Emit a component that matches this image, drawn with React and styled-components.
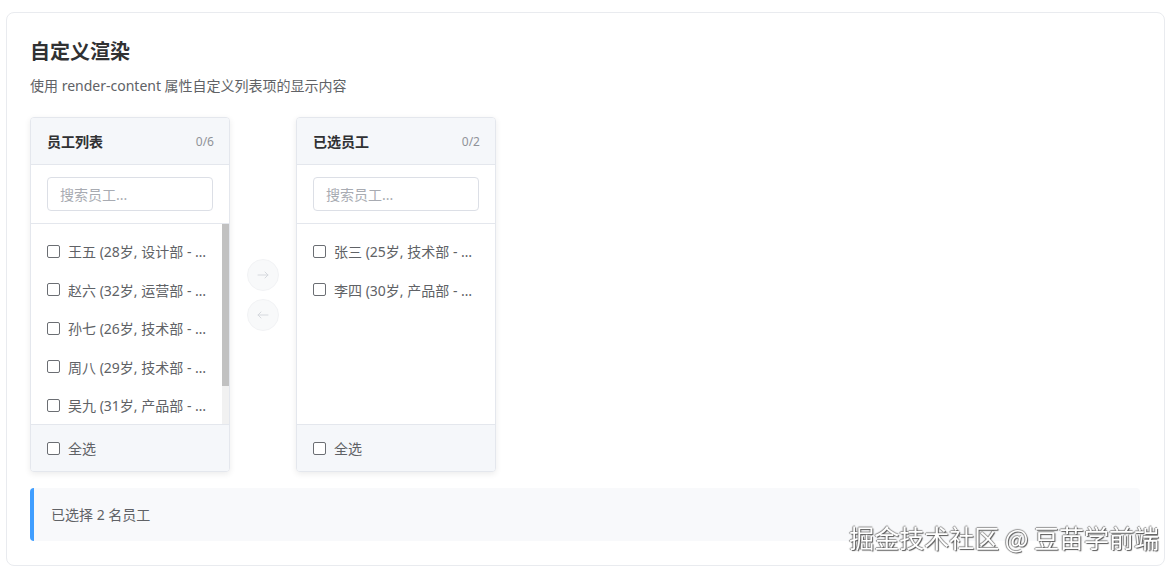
import React, { useState } from "react"
import styled, { createGlobalStyle } from "styled-components"

const GlobalStyle = createGlobalStyle`
  html, body {
    margin: 0;
    padding: 0;
    background: #ffffff;
  }
  body {
    font-family: "Noto Sans", "Noto Sans CJK SC", sans-serif;
    color: #303133;
  }
  * {
    box-sizing: border-box;
  }
`

const ITEM_H = 38.5
const LIST_H = 200
const LIST_PAD = 8

const Page = styled.div`
  padding: 12px 10px 4px 6px;
`

const Card = styled.section`
  border: 1px solid #e9ebef;
  border-radius: 8px;
  padding: 24px 24px 24px 23px;
  background: #fff;
`

const Title = styled.h3`
  margin: 0;
  font-size: 20px;
  line-height: 30px;
  font-weight: 700;
  color: #303133;
`

const Desc = styled.p`
  margin: 8px 0 20px;
  font-size: 14px;
  line-height: 22px;
  color: #606266;
`

const Transfer = styled.div`
  display: flex;
  align-items: center;
`

const Panel = styled.div`
  width: 200px;
  height: 355px;
  display: flex;
  flex-direction: column;
  border: 1px solid #e4e7ed;
  border-radius: 4px;
  overflow: hidden;
  background: #fff;
  box-shadow: 0 2px 6px rgba(0, 0, 0, 0.08);
`

const PanelHeader = styled.div`
  height: 47px;
  flex-shrink: 0;
  display: flex;
  align-items: center;
  justify-content: space-between;
  padding: 0 15px 0 16px;
  background: #f5f7fa;
  border-bottom: 1px solid #e4e7ed;
`

const PanelTitle = styled.span`
  font-size: 14px;
  font-weight: 600;
  color: #303133;
`

const Count = styled.span`
  font-size: 12px;
  color: #909399;
`

const SearchBox = styled.div`
  flex-shrink: 0;
  padding: 12px 16px;
  border-bottom: 1px solid #e4e7ed;
`

const SearchInput = styled.input`
  width: 100%;
  height: 34px;
  border: 1px solid #dcdfe6;
  border-radius: 4px;
  padding: 0 12px;
  font-family: inherit;
  font-size: 14px;
  color: #606266;
  outline: none;

  &::placeholder {
    color: #a8abb2;
  }
`

const ListWrap = styled.div`
  position: relative;
  height: ${LIST_H}px;
  flex-shrink: 0;
`

const List = styled.ul`
  height: 100%;
  margin: 0;
  padding: ${LIST_PAD}px 0;
  list-style: none;
  overflow-y: auto;
  scrollbar-width: none;

  &::-webkit-scrollbar {
    display: none;
  }
`

const ScrollTrack = styled.div`
  position: absolute;
  top: 0;
  right: 0;
  bottom: 0;
  width: 7px;
  background: #f1f1f1;
`

const ScrollThumb = styled.div`
  position: absolute;
  left: 0;
  right: 0;
  background: #c1c1c1;
`

const Item = styled.li`
  height: ${ITEM_H}px;
  display: flex;
  align-items: center;
  padding: 0 16px;
  font-size: 14px;
  color: #606266;
`

const Box = styled.span`
  width: 13px;
  height: 13px;
  flex-shrink: 0;
  border: 1px solid #6b6e73;
  border-radius: 2px;
  background: ${props => (props.checked ? "#409eff" : "#fff")};
  margin-right: 8px;
`

const Label = styled.span`
  width: 140px;
  white-space: nowrap;
  overflow: hidden;
  text-overflow: ellipsis;
`

const PanelFooter = styled.div`
  flex: 1;
  display: flex;
  align-items: center;
  padding: 0 16px;
  background: #f5f7fa;
  border-top: 1px solid #e4e7ed;
  font-size: 14px;
  color: #606266;
`

const Buttons = styled.div`
  display: flex;
  flex-direction: column;
  gap: 8px;
  margin: 0 17px;
`

const ArrowButton = styled.button`
  width: 32px;
  height: 32px;
  border-radius: 50%;
  border: 1px solid #f2f3f5;
  background: #f8f9fa;
  display: flex;
  align-items: center;
  justify-content: center;
  padding: 0;
  cursor: not-allowed;
`

const Notice = styled.div`
  margin-top: 16px;
  padding: 16px 20px 16px 17px;
  background: #f8f9fb;
  border-left: 4px solid #409eff;
  border-radius: 4px;
  font-size: 14px;
  line-height: 21px;
  color: #606266;
`

const Watermark = styled.div`
  position: fixed;
  right: 16px;
  bottom: 19px;
  font-family: "Noto Sans CJK SC", sans-serif;
  font-size: 25px;
  line-height: 30px;
  color: #ffffff;
  text-shadow: 1px 1px 1px #555, -1px 0 1px #888, 0 -1px 1px #999;
  pointer-events: none;
`

const employees = [
  { id: 1, name: "张三", age: 25, dept: "技术部", role: "前端工程师" },
  { id: 2, name: "李四", age: 30, dept: "产品部", role: "产品经理" },
  { id: 3, name: "王五", age: 28, dept: "设计部", role: "UI设计师" },
  { id: 4, name: "赵六", age: 32, dept: "运营部", role: "运营经理" },
  { id: 5, name: "孙七", age: 26, dept: "技术部", role: "后端工程师" },
  { id: 6, name: "周八", age: 29, dept: "技术部", role: "测试工程师" },
  { id: 7, name: "吴九", age: 31, dept: "产品部", role: "产品总监" },
  { id: 8, name: "郑十", age: 27, dept: "设计部", role: "交互设计师" },
]

const renderContent = e => `${e.name} (${e.age}岁, ${e.dept} - ${e.role})`

const Arrow = ({ left }) => (
  <svg width="14" height="14" viewBox="0 0 14 14" fill="none">
    <path
      d={left ? "M12 7H2M5 4L2 7l3 3" : "M2 7h10M9 4l3 3-3 3"}
      stroke="#d6d9de"
      strokeWidth="1"
      strokeLinecap="round"
      strokeLinejoin="round"
    />
  </svg>
)

const TransferPanel = ({ title, items, placeholder }) => {
  const [query, setQuery] = useState("")
  const [scrollTop, setScrollTop] = useState(0)
  const shown = items.filter(e => renderContent(e).includes(query))

  // the list draws its own thin scrollbar
  const contentH = shown.length * ITEM_H + LIST_PAD * 2
  const overflow = contentH > LIST_H
  const thumbH = (LIST_H * LIST_H) / contentH
  const thumbTop = (scrollTop / contentH) * LIST_H

  return (
    <Panel>
      <PanelHeader>
        <PanelTitle>{title}</PanelTitle>
        <Count>{`0/${items.length}`}</Count>
      </PanelHeader>
      <SearchBox>
        <SearchInput
          placeholder={placeholder}
          value={query}
          onChange={ev => setQuery(ev.target.value)}
        />
      </SearchBox>
      <ListWrap>
        <List onScroll={ev => setScrollTop(ev.target.scrollTop)}>
          {shown.map(e => (
            <Item key={e.id}>
              <Box />
              <Label>{renderContent(e)}</Label>
            </Item>
          ))}
        </List>
        {overflow && (
          <ScrollTrack>
            <ScrollThumb style={{ top: thumbTop, height: thumbH }} />
          </ScrollTrack>
        )}
      </ListWrap>
      <PanelFooter>
        <Box />
        <span>全选</span>
      </PanelFooter>
    </Panel>
  )
}

const App = () => {
  const selected = [1, 2]
  const source = employees.filter(e => !selected.includes(e.id)).slice(0, 6)
  const target = employees.filter(e => selected.includes(e.id))

  return (
    <Page>
      <GlobalStyle />
      <Card>
        <Title>自定义渲染</Title>
        <Desc>使用 render-content 属性自定义列表项的显示内容</Desc>
        <Transfer>
          <TransferPanel title="员工列表" items={source} placeholder="搜索员工..." />
          <Buttons>
            <ArrowButton disabled>
              <Arrow />
            </ArrowButton>
            <ArrowButton disabled>
              <Arrow left />
            </ArrowButton>
          </Buttons>
          <TransferPanel title="已选员工" items={target} placeholder="搜索员工..." />
        </Transfer>
        <Notice>已选择 {target.length} 名员工</Notice>
      </Card>
      <Watermark>掘金技术社区 @ 豆苗学前端</Watermark>
    </Page>
  )
}

export default App
